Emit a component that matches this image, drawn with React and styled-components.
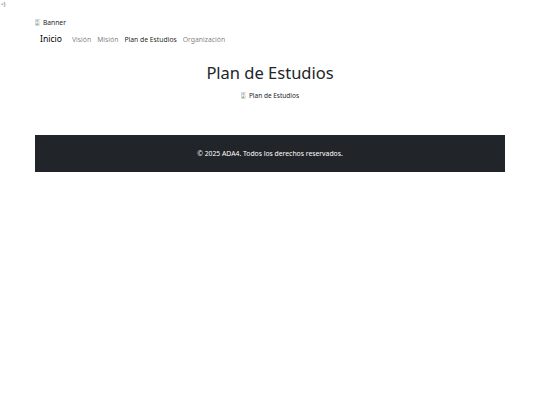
import React from 'react';
import styled, { createGlobalStyle } from 'styled-components';

const Global = createGlobalStyle`
  html, body { margin: 0; padding: 0; background: #fff; }
  body { font-family: "Noto Sans", "Open Sans", sans-serif; color: #212529; }
`;

const Corner = styled.div`
  font-size: 5px;
  line-height: 8px;
  color: #444;
  padding-left: 1px;
`;

const Container = styled.div`
  width: 470px;
  margin: 0 auto;
`;

const Banner = styled.div`
  display: flex;
  align-items: center;
  gap: 1px;
  height: 10px;
  margin-top: 9px;
  font-size: 6.7px;
  color: #212529;
`;

const Nav = styled.nav`
  display: flex;
  align-items: baseline;
  gap: 6px;
  padding: 6px 5px;
`;

const Brand = styled.span`
  font-size: 8.6px;
  color: #000;
  margin-right: 4px;
`;

const NavLink = styled.span`
  font-size: 6.8px;
  color: ${p => (p.$active ? 'rgba(0,0,0,.9)' : 'rgba(0,0,0,.55)')};
`;

const Title = styled.h1`
  margin: 12px 0 0;
  font-size: 16.5px;
  font-weight: 400;
  text-align: center;
  line-height: 1.2;
`;

const Figure = styled.div`
  display: flex;
  justify-content: center;
  align-items: center;
  gap: 1px;
  margin-top: 8px;
  font-size: 6.5px;
  height: 10px;
`;

const Footer = styled.footer`
  margin-top: 34px;
  height: 37px;
  background: #212529;
  color: #fff;
  font-size: 6.8px;
  display: flex;
  align-items: center;
  justify-content: center;
`;

const Broken = () => (
  <svg width="7" height="7" viewBox="0 0 16 16">
    <path d="M1 1h9l-2 6 3 3-2 5H1z" fill="#f0f0f0" stroke="#aaa" strokeWidth="1" />
    <path d="M2 13l3-4 3 4z" fill="#4caf50" />
    <circle cx="5" cy="4.5" r="1.5" fill="#4a90d9" />
  </svg>
);

export default function App() {
  return (
    <>
      <Global />
      <Corner>&lt;)</Corner>
      <Container>
        <Banner><Broken />Banner</Banner>
        <Nav>
          <Brand>Inicio</Brand>
          <NavLink>Visión</NavLink>
          <NavLink>Misión</NavLink>
          <NavLink $active>Plan de Estudios</NavLink>
          <NavLink>Organización</NavLink>
        </Nav>
        <Title>Plan de Estudios</Title>
        <Figure><Broken />Plan de Estudios</Figure>
        <Footer>© 2025 ADA4. Todos los derechos reservados.</Footer>
      </Container>
    </>
  );
}
